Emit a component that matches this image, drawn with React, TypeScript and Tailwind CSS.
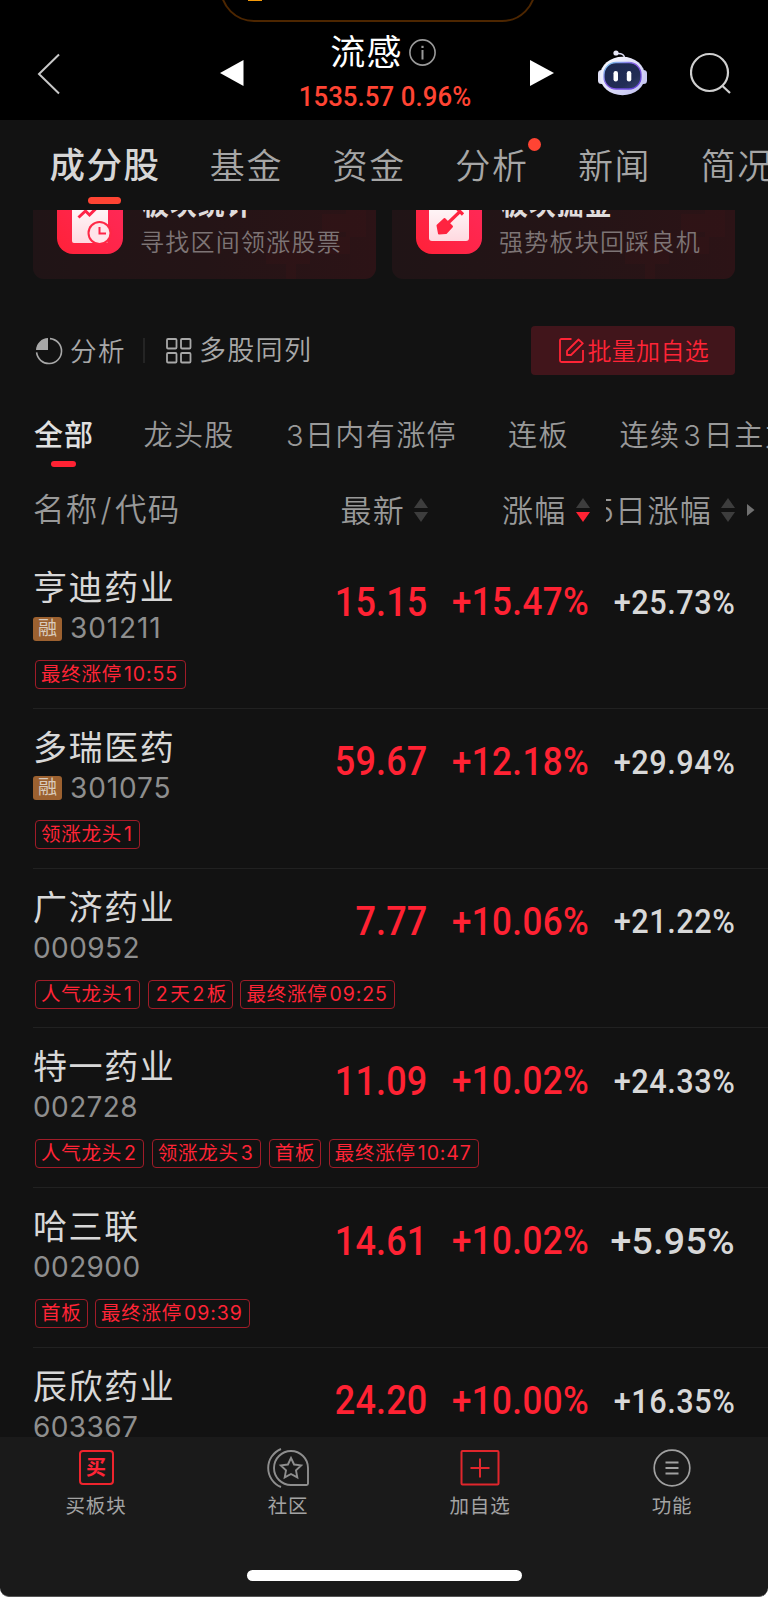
import { FC } from "react";

type Stock = {
  name: string;
  code: string;
  margin?: boolean;
  price: string;
  change: string;
  change5: string;
  tags: string[];
};

const stocks: Stock[] = [
  { name: "亨迪药业", code: "301211", margin: true, price: "15.15", change: "+15.47%", change5: "+25.73%", tags: ["最终涨停10:55"] },
  { name: "多瑞医药", code: "301075", margin: true, price: "59.67", change: "+12.18%", change5: "+29.94%", tags: ["领涨龙头1"] },
  { name: "广济药业", code: "000952", price: "7.77", change: "+10.06%", change5: "+21.22%", tags: ["人气龙头1", "2天2板", "最终涨停09:25"] },
  { name: "特一药业", code: "002728", price: "11.09", change: "+10.02%", change5: "+24.33%", tags: ["人气龙头2", "领涨龙头3", "首板", "最终涨停10:47"] },
  { name: "哈三联", code: "002900", price: "14.61", change: "+10.02%", change5: "+5.95%", tags: ["首板", "最终涨停09:39"] },
  { name: "辰欣药业", code: "603367", price: "24.20", change: "+10.00%", change5: "+16.35%", tags: [] },
];

const tabs = ["成分股", "基金", "资金", "分析", "新闻", "简况"];

const RobotIcon = () => (
  <svg width="50" height="46" viewBox="0 0 50 46" fill="none">
    <defs>
      <linearGradient id="head" x1="0" y1="0" x2="1" y2="1">
        <stop offset="0" stopColor="#ffffff" />
        <stop offset="1" stopColor="#bdbdf0" />
      </linearGradient>
      <linearGradient id="rim" x1="0" y1="0" x2="1" y2="1">
        <stop offset="0" stopColor="#7fd8ee" />
        <stop offset="0.45" stopColor="#8a5be8" />
        <stop offset="1" stopColor="#5a3fd8" />
      </linearGradient>
      <linearGradient id="face" x1="0" y1="0" x2="1" y2="1">
        <stop offset="0" stopColor="#1c2850" />
        <stop offset="0.7" stopColor="#222d55" />
        <stop offset="1" stopColor="#3a4570" />
      </linearGradient>
    </defs>
    <path d="M18 3.500c5-.500 8 0 8.500 4" stroke="#dcdcf4" strokeWidth="1.5" />
    <circle cx="18" cy="3" r="2.600" fill="#e6e6f5" />
    <rect x="0" y="20" width="7" height="14" rx="3.5" fill="#dfdff5" />
    <rect x="42" y="20" width="7" height="14" rx="3.5" fill="#c9c9f2" />
    <ellipse cx="24.500" cy="26" rx="22.500" ry="19.300" fill="url(#head)" />
    <rect x="6" y="12.500" width="37" height="26.500" rx="12" fill="url(#face)" stroke="url(#rim)" strokeWidth="1.3" />
    <rect x="15.500" y="21" width="4.500" height="10.500" rx="2.200" fill="#fff" />
    <rect x="28.800" y="21" width="4.500" height="10.500" rx="2.200" fill="#fff" />
  </svg>
);

const Header = () => (
  <header className="relative h-[119.5px] shrink-0 bg-black">
    <div className="absolute left-[220px] top-[-48px] h-[70px] w-[316px] rounded-[34px] border-2 border-[#4d2600]" />
    <div className="absolute left-[248px] top-0 h-px w-[14px] bg-[#f59a0a]" />
    <div className="flex h-full items-start pl-9">
      <svg className="mt-[53px]" width="24" height="42" viewBox="0 0 24 42" fill="none" stroke="#c8c8c8" strokeWidth="2">
        <path d="M23 1.5 3 21l20 19.5" />
      </svg>
      <svg className="ml-[160px] mt-[60px]" width="24" height="26" viewBox="0 0 24 26" fill="#fff">
        <path d="M0 13 23.5 0v26z" />
      </svg>
      <div className="ml-[41px] w-[200px]">
        <div className="mt-[30px] flex h-[44px] items-center justify-center gap-[6px] pr-[5px] text-white">
          <span className="ml-[1px] text-[35px] leading-[44px] tracking-[1.2px]">流感</span>
          <svg width="27" height="27" viewBox="0 0 27 27" fill="none" stroke="#9a9a9a" strokeWidth="1.6">
            <circle cx="13.5" cy="13.5" r="12.6" />
            <path d="M13.5 11v9.5" strokeWidth="2" />
            <path d="M13.5 6.8v2.2" strokeWidth="2.2" />
          </svg>
        </div>
        <div className="mt-[8px] origin-center scale-x-92 whitespace-nowrap text-center font-[Roboto] text-[28px] font-medium leading-[30px] tracking-[0.1px] text-[#ff4433]">
          1535.57 0.96%
        </div>
      </div>
      <svg className="ml-[45px] mt-[60px]" width="24" height="26" viewBox="0 0 24 26" fill="#fff">
        <path d="M24 13 0 0v26z" />
      </svg>
      <div className="ml-[44px] mt-[50px]">
        <RobotIcon />
      </div>
      <svg className="ml-[42px] mt-[52px]" width="42" height="42" viewBox="0 0 42 42" fill="none" stroke="#cfcfcf" strokeWidth="2.2">
        <circle cx="19.5" cy="20.5" r="18.5" />
        <path d="m32.5 34 7.5 7" />
      </svg>
    </div>
  </header>
);

const MainTabs = () => (
  <nav className="flex h-[90px] shrink-0 gap-[49.3px] overflow-hidden pl-[49.5px] pt-[24px]">
    {tabs.map((tab, i) => (
      <div key={tab} className="relative flex shrink-0 flex-col items-center">
        <span
          className={
            i === 0
              ? "text-[35.5px] font-medium leading-[44px] tracking-[1.5px] text-[#d6d6d6]"
              : "text-[35px] font-[350] leading-[44px] tracking-[1.7px] text-[#a6a6a6]"
          }
        >
          {tab}
        </span>
        {i === 0 && <span className="mt-[9px] mr-[1px] h-[7px] w-[33px] rounded-full bg-[#ff4433]" />}
        {tab === "分析" && <span className="absolute right-[-12px] top-[-5.5px] size-[13px] rounded-full bg-[#ff4433]" />}
      </div>
    ))}
  </nav>
);

const StatIcon = () => (
  <svg width="66" height="66" viewBox="0 0 66 66" fill="none">
    <defs>
      <linearGradient id="paper" x1="0" y1="0" x2="0" y2="1">
        <stop offset="0" stopColor="#fff" />
        <stop offset="1" stopColor="#ffd9e0" />
      </linearGradient>
      <linearGradient id="tile" x1="1" y1="0" x2="0" y2="1">
        <stop offset="0" stopColor="#ff2a5c" />
        <stop offset="1" stopColor="#ff2138" />
      </linearGradient>
    </defs>
    <rect width="66" height="66" rx="16" fill="url(#tile)" />
    <rect x="15" y="10" width="36" height="45" rx="2" fill="url(#paper)" />
    <path d="m21.500 29.500 7-6.500 4 4 9-9" stroke="#ff2448" strokeWidth="3" />
    <circle cx="42.5" cy="45" r="12" fill="#ff2846" />
    <circle cx="42.5" cy="45" r="10" fill="#ffe4e9" />
    <path d="M42.5 39v6.5H49" stroke="#ff2448" strokeWidth="2" />
  </svg>
);

const DigIcon = () => (
  <svg width="66" height="66" viewBox="0 0 66 66" fill="none">
    <rect width="66" height="66" rx="16" fill="url(#tile)" />
    <rect x="13" y="10" width="40" height="43" rx="3" fill="url(#paper)" />
    <path d="M31 36 44.500 23M41 20.500l6 6" stroke="#ff2440" strokeWidth="3.2" />
    <path d="m21.500 37.500 7-6.500 7.500 7.500-6 6.500-7 .500z" fill="#ff2440" stroke="#ff2440" strokeWidth="2" strokeLinejoin="round" />
  </svg>
);

const Card: FC<any> = ({ icon, title, desc }) => (
  <div className="relative flex h-[110px] flex-1 items-end overflow-hidden rounded-[11px] bg-linear-to-r from-[#201416] via-[#241416] to-[#2c1316] pl-[24px]">
    <svg className="absolute bottom-0 right-0" width="110" height="70" viewBox="0 0 110 70" fill="#ff2030" fillOpacity="0.025">
      <path d="M0 32h44v23H0zM20 55h10v15H20zM56 5h24v18H56zM80 0h20v28H80zM62 28h22v17H62z" />
    </svg>
    <div className="mb-[25px]">{icon}</div>
    <div className="relative mb-[19px] ml-[17px] flex flex-col">
      <span className="ml-[2px] text-[27px] font-bold leading-[41px] tracking-[0.9px] text-[#e0dcdc]">{title}</span>
      <span className="text-[24px] font-[350] leading-[34px] tracking-[1.25px] text-[#7d7475]">{desc}</span>
    </div>
  </div>
);

const Toolbar = () => (
  <div className="mt-[47px] flex h-[49px] shrink-0 items-center pl-[35px] pr-[33px] text-[26.5px] font-[350] text-[#a8a8a8]">
    <svg width="28" height="28" viewBox="0 0 28 28" fill="none">
      <path d="M15 1.600a12.500 12.500 0 1 1-13.400 13.800" stroke="#a8a8a8" strokeWidth="1.6" />
      <path d="M13 13H1A12.500 12.500 0 0 1 13 1z" fill="#a8a8a8" />
    </svg>
    <span className="ml-[7px] pt-[2px] tracking-[1.5px]">分析</span>
    <span className="ml-[17px] h-[25px] w-[2px] bg-[#242424]" />
    <svg className="ml-[21px]" width="26" height="26" viewBox="0 0 26 26" fill="none" stroke="#a8a8a8" strokeWidth="1.8">
      <rect x="1" y="1" width="9.500" height="9.500" rx="1" />
      <rect x="15" y="1" width="9.500" height="9.500" rx="1" />
      <rect x="1" y="15" width="9.500" height="9.500" rx="1" />
      <rect x="15" y="15" width="9.500" height="9.500" rx="1" />
    </svg>
    <span className="ml-[7px] pt-[2px] text-[27px] tracking-[1.3px]">多股同列</span>
    <button className="ml-auto flex h-[49px] w-[204.5px] items-center justify-center gap-1 rounded-[4px] bg-[#41151b] pl-[2px] text-[24px] font-[350] tracking-[0.3px] text-[#ff2436]">
      <svg width="25" height="25" viewBox="0 0 25 25" fill="none" stroke="#ff2436" strokeWidth="1.8" strokeLinejoin="round">
        <path d="M12.500 1H2.500Q1 1 1 2.500V22.500Q1 24 2.500 24H22.500Q24 24 24 22.500V12" />
        <path d="M8 17v-4L19.500 1.500 23.800 5.300 12 17z" />
      </svg>
      <span className="pt-[2px]">批量加自选</span>
    </button>
  </div>
);

const Filters = () => (
  <div className="mt-[38px] flex h-[56px] shrink-0 overflow-hidden whitespace-nowrap pl-[34px] text-[29px] font-[350] leading-[45px] tracking-[1.4px] text-[#999]">
    <div className="flex w-[109.5px] shrink-0 flex-col">
      <span className="font-medium tracking-[1px] text-[#e0e0e0]">全部</span>
      <span className="ml-[17px] mt-[3px] h-[6px] w-[25px] rounded-[3px] bg-[#ff2233]" />
    </div>
    <span className="w-[142.5px] shrink-0">龙头股</span>
    <span className="w-[222px] shrink-0">3日内有涨停</span>
    <span className="w-[111.5px] shrink-0">连板</span>
    <span className="shrink-0">
      连续<span className="ml-[3px] mr-[1.5px]">3</span>日主力
    </span>
  </div>
);

const Sort: FC<{ down?: boolean }> = ({ down }) => (
  <svg width="14" height="24" viewBox="0 0 14 24" className="mb-[3px] shrink-0">
    <path d="M7 0 14 10H0z" fill="#3d3d3d" />
    <path d="M7 24 0 14h14z" fill={down ? "#ff2233" : "#3d3d3d"} />
  </svg>
);

const TableHead = () => (
  <div className="flex h-[79px] shrink-0 items-center pl-[33px] pt-[5px] text-[31px] font-[350] leading-[40px] tracking-[1.3px] text-[#999]">
    <span className="mb-[2px] w-[231px] text-[31.5px]">
      名称<span className="mx-[2px]">/</span>代码
    </span>
    <div className="flex w-[164px] items-center justify-end gap-[9px]">
      最新
      <Sort />
    </div>
    <div className="flex w-[161.5px] items-center justify-end gap-[9px]">
      涨幅
      <Sort down />
    </div>
    <div className="ml-[16px] flex w-[129.5px] items-center justify-end gap-[9px] overflow-hidden">
      <span className="shrink-0">5日涨幅</span>
      <Sort />
    </div>
    <svg className="mb-[3px] ml-[12px]" width="8" height="12" viewBox="0 0 8 12" fill="#707070">
      <path d="M0 0 7.500 6 0 12z" />
    </svg>
  </div>
);

const Tag: FC<{ text: string }> = ({ text }) => (
  <span className="flex h-[29px] items-center rounded-[4px] border border-[#a01c28] px-[5px] text-[19.5px] leading-[27px] text-[#ff2436]">
    {text.split(/([\d:]+)/).filter(Boolean).map((part, i) => (
      <span key={i} className={/\d/.test(part) ? "ml-[2px] mr-[1.5px] tracking-[0.9px]" : "tracking-[0.75px]"}>
        {part}
      </span>
    ))}
  </span>
);

const Row: FC<{ stock: Stock }> = ({ stock }) => (
  <div className="ml-[33px] h-[159.75px] shrink-0 border-b border-[#212121]">
    <div className="flex h-[104px]">
      <div className="w-[200px] pt-[18px]">
        <div className="text-[34px] leading-[42px] tracking-[1.6px] text-[#d8d8d8]">{stock.name}</div>
        <div className="flex h-[39px] items-center">
          {stock.margin && (
            <span className="mr-2 flex h-[24px] w-[29px] items-center justify-center rounded-[3px] bg-[#9c6130] text-[19px] leading-[24px] text-[#d9cbbd]">
              融
            </span>
          )}
          <span
            className={
              stock.margin
                ? "text-[28px] font-[380] leading-[39px] tracking-[0.9px] text-[#8e8e8e]"
                : "text-[28px] font-[380] leading-[39px] tracking-[0.4px] text-[#8e8e8e]"
            }
          >
            {stock.code}
          </span>
        </div>
      </div>
      <div className="flex h-[107px] items-center whitespace-nowrap text-right font-[Roboto] font-medium text-[#ff2233]">
        <span className="w-[194.5px] origin-right scale-x-90 text-[40px] tracking-[0.2px]">{stock.price}</span>
        <span className="w-[161px] origin-right scale-x-92 text-[38px] tracking-[0.4px]">{stock.change}</span>
        <span
          className={
            stock.change5.length < 7
              ? "w-[146.5px] origin-right text-[37.5px] tracking-[0.3px] text-[#d8d8d8]"
              : "w-[146.5px] origin-right scale-x-93 text-[33px] tracking-[0.6px] text-[#d8d8d8]"
          }
        >
          {stock.change5}
        </span>
      </div>
    </div>
    <div className="ml-[2px] mt-[7px] flex gap-[7.5px]">
      {stock.tags.map((t) => (
        <Tag key={t} text={t} />
      ))}
    </div>
  </div>
);

const NavItem: FC<any> = ({ icon, label }) => (
  <div className="flex flex-1 flex-col items-center">
    <div className="flex h-[40px] items-center">{icon}</div>
    <span className="mt-[3px] text-[19.5px] leading-[30px] tracking-[0.8px] text-[#a3a3a3]">{label}</span>
  </div>
);

const BottomBar = () => (
  <div className="h-[160px] shrink-0 bg-white">
    <div className="flex h-full flex-col rounded-b-[9px] border-b border-[#555] bg-[#1a1a1a]">
      <div className="flex pt-[10.5px]">
        <NavItem
          label="买板块"
          icon={
            <span className="flex size-[35px] items-center justify-center rounded-[4px] border-2 border-[#ee242d] text-[20px] font-bold leading-none text-[#ff2436]">
              买
            </span>
          }
        />
        <NavItem
          label="社区"
          icon={
            <svg width="42" height="40" viewBox="0 0 42 40" fill="none" stroke="#8e8e8e" strokeWidth="1.9">
              <path d="M14 1A20.500 20.500 0 0 0 14 39" />
              <path d="M24 3A17 17 0 0 0 24 37H39.500Q41 37 41 35.500V20A17 17 0 0 0 24 3z" />
              <path d="m24 10 3.100 6.500 7.100.900-5.200 4.900 1.300 7.100-6.300-3.400-6.300 3.400 1.300-7.100-5.200-4.900 7.100-.900z" />
            </svg>
          }
        />
        <NavItem
          label="加自选"
          icon={
            <svg width="40" height="36" viewBox="0 0 40 36" fill="none" stroke="#e0262c" strokeWidth="2">
              <rect x="1.500" y="1" width="37" height="33.500" rx="1" />
              <path d="M20 8.500v19M10.500 18h19" />
            </svg>
          }
        />
        <NavItem
          label="功能"
          icon={
            <svg width="38" height="38" viewBox="0 0 38 38" fill="none" stroke="#a0a0a0" strokeWidth="1.7">
              <circle cx="19" cy="19" r="17.8" />
              <path d="M12.500 13.500h13M12.500 19h13M12.500 24.500h13" strokeWidth="2" />
            </svg>
          }
        />
      </div>
      <div className="mx-auto mt-[49.5px] h-[11px] w-[275px] rounded-full bg-white" />
    </div>
  </div>
);

const App = () => {
  return (
    <div className="flex h-[1597px] w-[768px] flex-col overflow-hidden bg-[#121212] font-['Inter','Noto_Sans_CJK_SC',sans-serif]">
      <Header />
      <MainTabs />
      <div className="flex h-[69.5px] shrink-0 items-end gap-4 overflow-hidden px-[33px]">
        <Card icon={<StatIcon />} title="板块统计" desc="寻找区间领涨股票" />
        <Card icon={<DigIcon />} title="板块掘金" desc="强势板块回踩良机" />
      </div>
      <Toolbar />
      <Filters />
      <TableHead />
      <div className="flex min-h-0 flex-1 flex-col overflow-hidden pt-[1px]">
        {stocks.map((s) => (
          <Row key={s.code} stock={s} />
        ))}
      </div>
      <BottomBar />
    </div>
  );
};

export default App;
